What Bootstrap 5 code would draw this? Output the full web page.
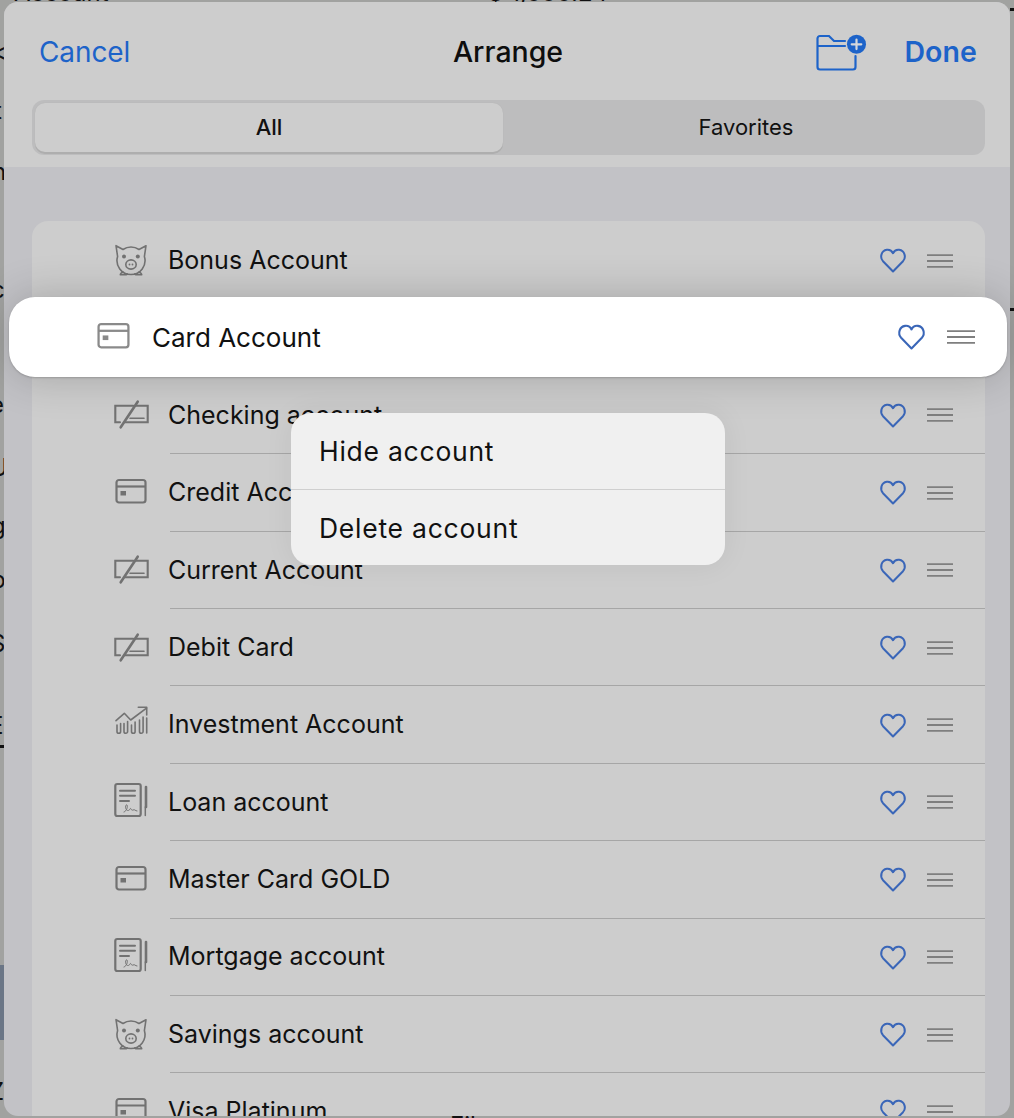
<!DOCTYPE html>
<html lang="en">
<head>
<meta charset="utf-8">
<title>Arrange</title>
<link href="https://cdn.jsdelivr.net/npm/bootstrap@5.3.0/dist/css/bootstrap.min.css" rel="stylesheet">
<style>
html,body{height:100%}
body{background:#a1a2a0;font-family:"Inter","Liberation Sans",sans-serif;color:#111;overflow:hidden;position:relative}
symbol{overflow:visible}
.frag{position:absolute;font-size:24px;line-height:1;color:#111;white-space:nowrap}
.tick{position:absolute;background:#111;width:4px;height:3px}
.chart-edge{position:absolute;left:0;top:965px;width:4px;height:75px;background:#6b7686}
.sheet{position:absolute;left:4px;top:2px;width:1006px;height:1114px;background:#c2c2c6;border-radius:14px;overflow:hidden}
.sheet-head{background:#cdcdcd;height:165px;padding:0 33px 0 28px}
.head-bar{height:100px}
.head-side{flex:1 1 0}
.cancel-btn{font-size:28px;color:#1d63c9;padding-left:7px;letter-spacing:-.1px}
.head-title{font-size:28.500px;font-weight:500;color:#0e0e0e}
.done-btn{font-size:28.500px;font-weight:600;color:#1d63c9;margin-left:37px;letter-spacing:.1px}
.seg{height:55px;background:#bdbdbe;border-radius:12px;padding:3px;margin-right:-8px;margin-top:-2px}
.seg-tab{flex:1 1 0;display:flex;align-items:center;justify-content:center;font-size:22px;color:#111;border-radius:10px;padding-left:7px}
.seg-on{flex:0 0 468px;background:#cdcdcd;font-weight:500;box-shadow:0 2px 0 #aeaeae,0 0 1px #aeaeae;padding-left:0}
.acct-list{margin:54px 25px 0 28px;background:#cdcdcd;border-radius:16px 16px 0 0;padding-top:1px}
.acct-row{height:77.400px;display:flex;align-items:center;padding:0 32px 0 82px;position:relative;font-size:25px;background:transparent;border:0;color:#111}
.acct-row::after{content:"";position:absolute;left:138px;right:0;bottom:0;height:1px;background:#a6a6a6}
.acct-row:last-child::after{display:none}
.acct-ico{width:34px;height:34px;flex:none;margin-right:20px;overflow:visible;color:#727272}
.acct-name{flex:1 1 auto}
.hrt{width:26px;height:25px;flex:none;margin-right:21px;overflow:visible}
.grip{width:26px;height:14px;flex:none}
.lifted{position:absolute;left:9px;top:297px;width:998px;height:80px;background:#fff;border-radius:26px;box-shadow:0 0 44px rgba(0,0,0,.2),0 1px 2px rgba(0,0,0,.18);display:flex;align-items:center;padding:0 32px 0 87px;font-size:26px;color:#111}
.lifted .acct-ico{margin-right:21px;width:35px;height:35px;color:#8a8a8a}
.lifted .hrt{width:27px;height:26px;margin-right:22px}
.lifted .grip{width:28px}
.ctx-menu{position:absolute;left:291px;top:413px;width:434px;height:152px;background:#f0f0f0;border-radius:20px;box-shadow:0 0 30px rgba(0,0,0,.06);overflow:hidden}
.ctx-item{height:76px;display:flex;align-items:center;padding:2px 28px 0;font-size:26.500px;letter-spacing:.75px;background:transparent;border:0;color:#111}
.ctx-item+.ctx-item{border-top:1.500px solid #cfcfcf}
</style>
</head>
<body>
<svg width="0" height="0" class="position-absolute">
<defs>
<symbol id="i-card" viewBox="0 0 34 34"><g fill="none" stroke="currentColor" stroke-width="2.200"><rect x="2.500" y="4" width="29" height="22.500" rx="2.500"/><path d="M2.500 10.500h29"/></g><rect x="6.500" y="15" width="5.500" height="4.500" fill="currentColor"/></symbol>
<symbol id="i-slash" viewBox="0 0 34 34"><g fill="none" stroke="currentColor" stroke-linecap="round"><path stroke-width="2.100" d="M19.300 7.700H1.300v16.600H6M21.500 7.700h12.200v16.600H11"/><path stroke-width="2.600" d="M23.700 3.700 6.700 29.300"/><path stroke-width="1.600" d="M16 20.300h14"/></g></symbol>
<symbol id="i-chart" viewBox="0 0 34 34"><g fill="none" stroke="currentColor" stroke-width="1.600" stroke-linecap="round" stroke-linejoin="round"><path d="M2 12.700 10.300 5.300 16.700 12 32.500 .2"/><path d="M24.300 -.7h8.400V7"/><path d="M3 17v6.500a1.700 1.700 0 0 0 3.600 0V15.500M10 15.500v8a1.700 1.700 0 0 0 3.600 0V13.500M17.500 17v6.500a1.700 1.700 0 0 0 3.600 0V14M25.500 12v11.500a1.700 1.700 0 0 0 3.600 0V9M32.700 10v15"/></g></symbol>
<symbol id="i-doc" viewBox="0 0 34 34"><g fill="none" stroke="currentColor" stroke-linecap="round"><rect x="1.300" y="-1" width="25.400" height="32" rx="2" stroke-width="2.200"/><path stroke-width="2" d="M6 5.700h15M6 10.700h15M6 16h9"/><path stroke-width="1" d="M10 27c3-1 4-6 3-7s-2 2-1 4 3 2 4 0 1 2 3 1 2 1 4 1"/><path stroke-width="2.600" d="M32 2v20"/><path stroke-width="1.500" d="M31.300 22v8.500"/></g></symbol>
<symbol id="i-pig" viewBox="0 0 34 34"><g fill="none" stroke="currentColor" stroke-width="1.600" stroke-linejoin="round" stroke-linecap="round"><path d="M9 5.500 2 1.700 3.600 12.500A14 14 0 1 0 30.400 12.500L32 1.700 25 5.500A14 14 0 0 0 9 5.500Z"/><ellipse cx="17" cy="20.500" rx="5.200" ry="4.600"/><path d="M9.500 28.200c-1.700.2-3 1.300-3.200 2.500h6c.7 0 1-.6.8-.9M24.500 28.200c1.700.2 3 1.300 3.200 2.500h-6c-.7 0-1-.6-.8-.9"/></g><circle cx="10" cy="12.500" r="2" fill="currentColor"/><circle cx="23.800" cy="12.500" r="2" fill="currentColor"/><circle cx="15.500" cy="20.500" r=".9" fill="currentColor"/><circle cx="18.500" cy="20.500" r=".9" fill="currentColor"/></symbol>
<symbol id="i-heart" viewBox="0 0 26 25"><path d="M13 23.500 3 13.200C-.5 9.300 1.300 2.600 6.800 1.800 9.800 1.400 12 3.200 13 5.200 14 3.200 16.200 1.400 19.200 1.800 24.700 2.600 26.500 9.300 23 13.200Z" fill="none" stroke="#3a66b8" stroke-width="2" stroke-linejoin="round"/></symbol>
<symbol id="i-grip" viewBox="0 0 26 14" preserveAspectRatio="none"><path d="M0 1.200h26M0 7h26M0 12.800h26" stroke="#7f7f7f" stroke-width="1.800"/></symbol>
</defs>
</svg>

<span class="frag" style="left:14px;top:-19px">Account</span>
<span class="frag" style="left:488px;top:-19px">$ 1,000.24</span>
<span class="frag" style="left:-9px;top:40px">&lt;</span>
<span class="frag" style="left:-6px;top:99px">t</span>
<span class="frag" style="left:-8px;top:160px">n</span>
<span class="frag" style="left:-9px;top:278px">c</span>
<span class="frag" style="left:-10px;top:393px">e</span>
<span class="frag" style="left:-10px;top:456px">U</span>
<span class="frag" style="left:-9px;top:514px">g</span>
<span class="frag" style="left:-9px;top:568px">p</span>
<span class="frag" style="left:-10px;top:632px">S</span>
<span class="frag" style="left:-11px;top:714px">E</span>
<span class="frag" style="left:-11px;top:1080px">Z</span>
<span class="frag" style="left:450px;top:1114px">Filter</span>
<span class="tick" style="left:0;top:745px"></span>
<span class="tick" style="left:1010px;top:8px"></span>
<span class="tick" style="left:1010px;top:308px"></span>
<span class="chart-edge"></span>

<div class="sheet">
  <div class="sheet-head">
    <div class="head-bar d-flex align-items-center">
      <div class="head-side cancel-btn">Cancel</div>
      <div class="head-title">Arrange</div>
      <div class="head-side d-flex align-items-center justify-content-end">
        <svg width="51" height="37" viewBox="0 0 51 37" fill="none" aria-hidden="true"><path d="M29 7H18L13 2H4A2.500 2.500 0 0 0 1.500 4.500V33A2.500 2.500 0 0 0 4 35.500H37A2.500 2.500 0 0 0 39.500 33V22M1.500 12H29" stroke="#1d63c9" stroke-width="2.200" stroke-linecap="round"/><circle cx="40.500" cy="10.300" r="9.500" fill="#1d63c9"/><path d="M40.500 5.500v9.600M35.700 10.300h9.600" stroke="#d5d8dc" stroke-width="2.200" stroke-linecap="round"/></svg>
        <span class="done-btn">Done</span>
      </div>
    </div>
    <div class="seg d-flex">
      <div class="seg-tab seg-on">All</div>
      <div class="seg-tab">Favorites</div>
    </div>
  </div>

  <div class="acct-list list-group list-group-flush">
    <div class="list-group-item acct-row"><svg class="acct-ico"><use href="#i-pig"/></svg><span class="acct-name">Bonus Account</span><svg class="hrt"><use href="#i-heart"/></svg><svg class="grip"><use href="#i-grip"/></svg></div>
    <div class="list-group-item acct-row"></div>
    <div class="list-group-item acct-row"><svg class="acct-ico"><use href="#i-slash"/></svg><span class="acct-name">Checking account</span><svg class="hrt"><use href="#i-heart"/></svg><svg class="grip"><use href="#i-grip"/></svg></div>
    <div class="list-group-item acct-row"><svg class="acct-ico"><use href="#i-card"/></svg><span class="acct-name">Credit Account</span><svg class="hrt"><use href="#i-heart"/></svg><svg class="grip"><use href="#i-grip"/></svg></div>
    <div class="list-group-item acct-row"><svg class="acct-ico"><use href="#i-slash"/></svg><span class="acct-name">Current Account</span><svg class="hrt"><use href="#i-heart"/></svg><svg class="grip"><use href="#i-grip"/></svg></div>
    <div class="list-group-item acct-row"><svg class="acct-ico"><use href="#i-slash"/></svg><span class="acct-name">Debit Card</span><svg class="hrt"><use href="#i-heart"/></svg><svg class="grip"><use href="#i-grip"/></svg></div>
    <div class="list-group-item acct-row"><svg class="acct-ico"><use href="#i-chart"/></svg><span class="acct-name">Investment Account</span><svg class="hrt"><use href="#i-heart"/></svg><svg class="grip"><use href="#i-grip"/></svg></div>
    <div class="list-group-item acct-row"><svg class="acct-ico"><use href="#i-doc"/></svg><span class="acct-name">Loan account</span><svg class="hrt"><use href="#i-heart"/></svg><svg class="grip"><use href="#i-grip"/></svg></div>
    <div class="list-group-item acct-row"><svg class="acct-ico"><use href="#i-card"/></svg><span class="acct-name">Master Card GOLD</span><svg class="hrt"><use href="#i-heart"/></svg><svg class="grip"><use href="#i-grip"/></svg></div>
    <div class="list-group-item acct-row"><svg class="acct-ico"><use href="#i-doc"/></svg><span class="acct-name">Mortgage account</span><svg class="hrt"><use href="#i-heart"/></svg><svg class="grip"><use href="#i-grip"/></svg></div>
    <div class="list-group-item acct-row"><svg class="acct-ico"><use href="#i-pig"/></svg><span class="acct-name">Savings account</span><svg class="hrt"><use href="#i-heart"/></svg><svg class="grip"><use href="#i-grip"/></svg></div>
    <div class="list-group-item acct-row"><svg class="acct-ico"><use href="#i-card"/></svg><span class="acct-name">Visa Platinum</span><svg class="hrt"><use href="#i-heart"/></svg><svg class="grip"><use href="#i-grip"/></svg></div>
  </div>
</div>

<div class="lifted"><svg class="acct-ico"><use href="#i-card"/></svg><span class="acct-name">Card Account</span><svg class="hrt"><use href="#i-heart"/></svg><svg class="grip"><use href="#i-grip"/></svg></div>

<div class="ctx-menu list-group">
  <div class="list-group-item ctx-item">Hide account</div>
  <div class="list-group-item ctx-item">Delete account</div>
</div>

<script src="https://cdn.jsdelivr.net/npm/bootstrap@5.3.0/dist/js/bootstrap.bundle.min.js"></script>
</body>
</html>
